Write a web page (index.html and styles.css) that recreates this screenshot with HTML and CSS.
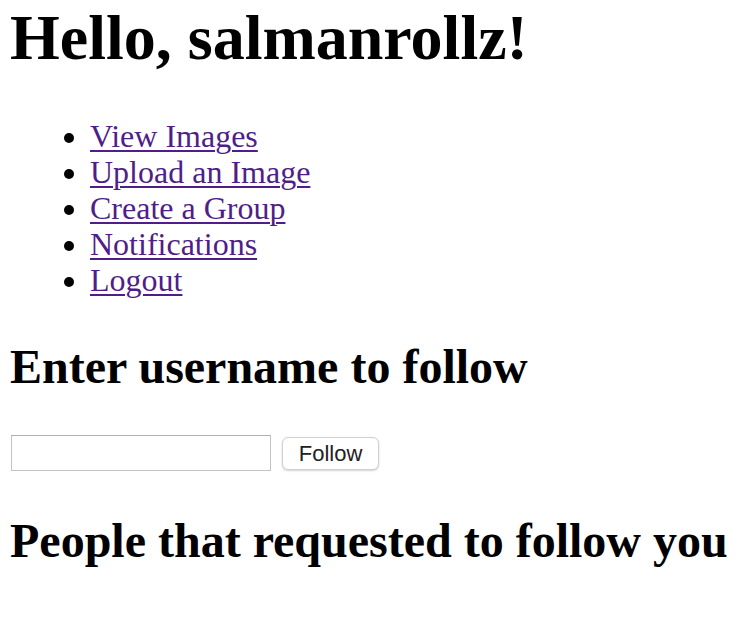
FILE: index.html
```html
<!DOCTYPE html>
<html>
<head>
<meta charset="utf-8">
<title>Home</title>
<link rel="stylesheet" href="styles.css">
</head>
<body>
<div class="page">
  <h1 class="title">Hello, salmanrollz!</h1>
  <ul class="nav">
    <li><a href="#">View Images</a></li>
    <li><a href="#">Upload an Image</a></li>
    <li><a href="#">Create a Group</a></li>
    <li><a href="#">Notifications</a></li>
    <li><a href="#">Logout</a></li>
  </ul>
  <h2 class="heading">Enter username to follow</h2>
  <form class="follow-form">
    <input class="follow-input" type="text">
    <button class="follow-btn" type="button">Follow</button>
  </form>
  <h2 class="heading heading-last">People that requested to follow you</h2>
</div>
</body>
</html>
```

FILE: styles.css
```css
html, body {
  margin: 0;
  padding: 0;
  background: #ffffff;
}
.page {
  padding: 0 0 0 10px;
  font-family: "Liberation Serif", "Times New Roman", serif;
  color: #000;
}
.title {
  font-size: 64px;
  line-height: 72px;
  font-weight: bold;
  margin: 2px 0 44px;
  white-space: nowrap;
}
.nav {
  margin: 0;
  padding-left: 80px;
  font-size: 32px;
  line-height: 36px;
  list-style: disc;
}
.nav a {
  color: #4f1e88;
  text-decoration: underline;
  text-decoration-thickness: 2px;
  text-underline-offset: 3px;
}
.heading {
  font-size: 48px;
  line-height: 54px;
  font-weight: bold;
  margin: 42px 0 0;
  white-space: nowrap;
}
.follow-form {
  display: flex;
  align-items: center;
  gap: 11px;
  margin: 41px 0 0 1px;
}
.follow-input {
  width: 260px;
  height: 36px;
  box-sizing: border-box;
  border: 1px solid #c2c2c2;
  border-top-color: #b0b0b0;
  margin: 0;
  padding: 0 4px;
  font-size: 22px;
  background: #fff;
}
.follow-btn {
  width: 97px;
  height: 33px;
  box-sizing: border-box;
  margin: 0;
  padding: 2px 0 0;
  font-family: "Liberation Sans", Arial, sans-serif;
  font-size: 22px;
  color: #222;
  background: #fff;
  border: 1px solid #cfcfcf;
  border-radius: 6px;
  box-shadow: 0 1px 2px rgba(0,0,0,0.18);
}
.heading-last {
  margin-top: 43px;
}
```
